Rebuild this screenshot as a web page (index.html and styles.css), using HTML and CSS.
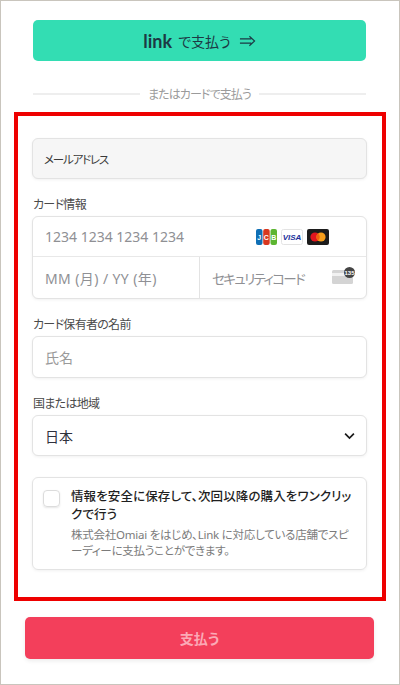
FILE: index.html
```html
<!DOCTYPE html>
<html lang="ja">
<head>
<meta charset="utf-8">
<title>支払う</title>
<link rel="stylesheet" href="styles.css">
</head>
<body>
<div class="frame">
	<button type="button" class="link_btn">
		<span class="link_logo">link</span>
		<span>で支払う</span>
		<svg class="link_arrow" width="17" height="12" viewBox="0 0 18 12"><path d="M1 3.7h12M1 8.3h12M11 1l5.5 5-5.5 5" fill="none" stroke="#1d3944" stroke-width="1.2"/></svg>
	</button>
	<div class="divider"><span>またはカードで支払う</span></div>
	<div class="red_box">
		<div class="field email">メールアドレス</div>
		<div class="label">カード情報</div>
		<div class="card_group">
			<div class="card_row">
				<span class="ph">1234 1234 1234 1234</span>
				<span class="brands">
					<svg width="21" height="16" viewBox="0 0 21 16"><rect x="0" width="6.5" height="16" rx="2" fill="#0f6fb5"/><rect x="7.2" width="6.5" height="16" rx="2" fill="#d8371f"/><rect x="14.5" width="6.5" height="16" rx="2" fill="#5cb531"/><text x="3.2" y="10.5" class="jcb">J</text><text x="10.4" y="10.5" class="jcb">C</text><text x="17.7" y="10.5" class="jcb">B</text></svg>
					<svg width="22" height="16" viewBox="0 0 22 16"><rect x=".5" y=".5" width="21" height="15" rx="2" fill="#fff" stroke="#e3e3e3"/><text x="11" y="11" class="visa">VISA</text></svg>
					<svg width="22" height="16" viewBox="0 0 22 16"><rect width="22" height="16" rx="2" fill="#1c1c1c"/><circle cx="8" cy="8" r="4.6" fill="#e2151f"/><circle cx="14" cy="8" r="4.6" fill="#f79e1b"/><path d="M11 4.4a4.6 4.6 0 0 1 0 7.2a4.6 4.6 0 0 1 0-7.2z" fill="#f2600f"/></svg>
				</span>
			</div>
			<div class="card_split">
				<div class="card_cell date ph">MM (月) / YY (年)</div>
				<div class="card_cell cvc">
					<span class="ph cvc_ph">セキュリティコード</span>
					<span class="cvc_icon">
						<svg width="23" height="18" viewBox="0 0 23 18"><rect x="0" y="4" width="21" height="14" rx="1.5" fill="#d4d4d4"/><rect x="0" y="7" width="21" height="3" fill="#f1f1f1"/><circle cx="17.5" cy="6.5" r="5.5" fill="#444"/><text x="17.5" y="8.6" class="cvc_num">135</text></svg>
					</span>
				</div>
			</div>
		</div>
		<div class="label">カード保有者の名前</div>
		<div class="field name ph">氏名</div>
		<div class="label">国または地域</div>
		<div class="field select">
			<span>日本</span>
			<svg width="11" height="8" viewBox="0 0 12 8"><path d="M1.2 1.5L6 6.2l4.8-4.7" fill="none" stroke="#1a1a1a" stroke-width="1.9"/></svg>
		</div>
		<div class="save_box">
			<span class="check"></span>
			<div class="save_text">
				<div class="save_title">情報を安全に保存して、次回以降の購入をワンクリックで行う</div>
				<div class="save_desc">株式会社Omiai をはじめ、Link に対応している店舗でスピーディーに支払うことができます。</div>
			</div>
		</div>
	</div>
	<button type="button" class="pay_btn">支払う</button>
</div>
</body>
</html>
```

FILE: styles.css
```css
html, body {
	margin: 0;
	padding: 0;
	background: #fff;
}
body {
	font-family: "Noto Sans", "Noto Sans CJK JP", sans-serif;
	font-feature-settings: "palt";
	color: #30313d;
}
.frame {
	box-sizing: border-box;
	width: 400px;
	height: 685px;
	border: 1px solid #c9c5bd;
	padding: 19px 13px 0 13px;
	overflow: hidden;
}
button {
	font-family: inherit;
	font-feature-settings: inherit;
	display: flex;
	align-items: center;
	justify-content: center;
	border: 0;
}
.link_btn {
	width: 333px;
	height: 41px;
	margin: 0 0 0 19px;
	gap: 6px;
	background: #33ddb3;
	border-radius: 5px;
	color: #1d3944;
	font-size: 14px;
}
.link_logo {
	font-family: "Lato", sans-serif;
	font-weight: 700;
	font-size: 18px;
}
.link_arrow {
	margin-left: 2px;
}
.divider {
	display: flex;
	align-items: center;
	gap: 8px;
	width: 333px;
	height: 20px;
	margin: 23px 0 8px 19px;
	color: #9b9b9b;
	font-size: 12px;
	letter-spacing: -0.9px;
}
.divider::before, .divider::after {
	content: "";
	flex: 1;
	height: 2px;
	background: #eeeeee;
}
.red_box {
	box-sizing: border-box;
	width: 372px;
	height: 489px;
	border: 4px solid #ee0000;
	padding: 22px 15px 0 14px;
}
.field {
	box-sizing: border-box;
	display: flex;
	align-items: center;
	height: 42px;
	padding: 0 12px;
	background: #fff;
	border: 1px solid #e3e3e3;
	border-radius: 6px;
	box-shadow: 0 1px 3px rgba(0, 0, 0, 0.06);
	font-size: 14px;
}
.email {
	height: 41px;
	background: #f6f6f6;
	padding: 0 11px;
	font-size: 11.5px;
	letter-spacing: -1.2px;
	color: #3a3a3a;
}
.label {
	height: 18px;
	margin: 17px 0 2px 1px;
	font-size: 12px;
	line-height: 18px;
	letter-spacing: -0.7px;
	color: #4a4a4a;
}
.ph {
	color: #8f9094;
	font-size: 14px;
}
.name {
	color: #9a9a9a;
}
.card_group {
	box-sizing: border-box;
	height: 83px;
	background: #fff;
	border: 1px solid #e3e3e3;
	border-radius: 6px;
	box-shadow: 0 1px 3px rgba(0, 0, 0, 0.06);
}
.card_row {
	box-sizing: border-box;
	display: flex;
	align-items: center;
	justify-content: space-between;
	height: 40px;
	padding: 0 37px 0 12px;
	border-bottom: 1px solid #e8e8e8;
}
.brands {
	display: flex;
	align-items: center;
	gap: 4px;
}
.jcb {
	font: 700 7px "Liberation Sans", sans-serif;
	fill: #fff;
	text-anchor: middle;
}
.visa {
	font: italic 700 8px "Liberation Sans", sans-serif;
	fill: #1a2f9c;
	text-anchor: middle;
}
.cvc_num {
	font: 700 6px "Liberation Sans", sans-serif;
	fill: #fff;
	text-anchor: middle;
}
.card_split {
	display: flex;
	height: 41px;
}
.card_cell {
	box-sizing: border-box;
	display: flex;
	align-items: center;
	white-space: nowrap;
}
.date {
	width: 166px;
	padding-left: 12px;
	letter-spacing: 0.4px;
}
.cvc {
	flex: 1;
	justify-content: space-between;
	border-left: 1px solid #e3e3e3;
	padding: 0 11px 0 12px;
}
.cvc_ph {
	font-size: 13.5px;
	letter-spacing: -1.6px;
}
.cvc_icon {
	display: flex;
	margin-top: -6px;
}
.select {
	height: 41px;
	justify-content: space-between;
	color: #30313d;
	font-size: 14px;
	padding-right: 11px;
}
.save_box {
	box-sizing: border-box;
	display: flex;
	gap: 11px;
	height: 93px;
	margin-top: 21px;
	padding: 10px 10px 0 10px;
	border: 1px solid #e3e3e3;
	border-radius: 6px;
	box-shadow: 0 1px 3px rgba(0, 0, 0, 0.06);
}
.check {
	flex: none;
	box-sizing: border-box;
	width: 17px;
	height: 17px;
	margin-top: 2px;
	border: 1px solid #dcdcdc;
	border-radius: 4px;
	box-shadow: 0 1px 2px rgba(0, 0, 0, 0.1);
}
.save_title {
	font-size: 12.5px;
	line-height: 18px;
	font-weight: 500;
	letter-spacing: 0.1px;
	color: #1f1f1f;
}
.save_desc {
	margin-top: 3px;
	font-size: 11.5px;
	line-height: 16px;
	letter-spacing: -0.25px;
	color: #7b7b7b;
}
.pay_btn {
	width: 349px;
	height: 42px;
	margin: 16px 0 0 11px;
	background: #f33f5b;
	border-radius: 5px;
	box-shadow: 0 2px 4px rgba(0, 0, 0, 0.08);
	color: #fba9b6;
	font-size: 14px;
	font-weight: 700;
}
```
